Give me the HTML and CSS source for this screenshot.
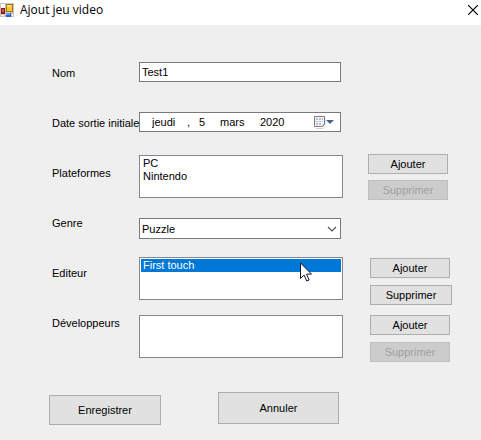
FILE: index.html
```html
<!DOCTYPE html>
<html lang="fr">
<head>
<meta charset="utf-8">
<title>Ajout jeu video</title>
<link rel="stylesheet" href="styles.css">
</head>
<body>
<header class="titlebar">
  <svg class="app-icon" width="14" height="16" viewBox="0 0 14 16" shape-rendering="crispEdges" aria-hidden="true">
    <path fill="#c4c4c4" d="M0 1h14v14H0z"/>
    <path fill="#fff" d="M1 2h4v4H1zM1 13h3v1H1zM12 12h1v2h-1z"/>
    <path fill="#8f1d12" d="M1 6h4v6H1z"/><path fill="#d8543f" d="M2 7h2v3H2z"/>
    <path fill="#9c7a1c" d="M6 2h7v8H6z"/><path fill="#ffc72b" d="M7 3h5v6H7z"/><path fill="#ffe27b" d="M7 3h4v2H7z"/>
    <path fill="#2f62c9" d="M6 11h5v4H6z"/><path fill="#6f9df0" d="M6 11h4v2H6z"/>
  </svg>
  <h1 class="title">Ajout jeu video</h1>
  <button class="close" type="button" aria-label="Fermer">
    <svg width="10" height="10" viewBox="0 0 10 10" aria-hidden="true"><path d="M0 0l10 10M10 0L0 10" stroke="#000" stroke-width="1.2" fill="none"/></svg>
  </button>
</header>
<form class="form">
  <div class="row row-name">
    <label class="label" for="nom">Nom</label>
    <input class="field" id="nom" type="text" value="Test1">
  </div>
  <div class="row row-date">
    <label class="label" for="jour">Date sortie initiale</label>
    <div class="field date">
      <input class="part weekday" type="text" value="jeudi" aria-label="Jour de la semaine">
      <span class="comma">,</span>
      <input class="part day" id="jour" type="text" value="5">
      <input class="part month" type="text" value="mars" aria-label="Mois">
      <input class="part year" type="text" value="2020" aria-label="Année">
      <button class="calendar" type="button" aria-label="Calendrier">
        <svg width="22" height="14" viewBox="0 0 22 14" aria-hidden="true">
          <path d="M3 13.5h7l2-2V3" fill="none" stroke="#d3cfcf"/>
          <path d="M1.500 1.500h10v8l-2 2h-8z" fill="#f3f6fa" stroke="#81797a"/>
          <path d="M3 3h2v2H3zM6 3h2v2H6zM9 3h1v2H9zM3 6h2v1H3zM6 6h2v1H6zM9 6h1v1H9zM3 8h2v2H3zM6 8h2v2H6z" fill="#b3bfd0"/>
          <path d="M11 9v2H9z" fill="#81797a"/>
          <path d="M13 5h8l-4 4z" fill="#45608f"/>
        </svg>
      </button>
    </div>
  </div>
  <div class="row row-platforms">
    <label class="label" for="plateformes">Plateformes</label>
    <select class="list" id="plateformes" size="3"><option>PC</option><option>Nintendo</option></select>
    <div class="buttons">
      <button class="button" type="button">Ajouter</button>
      <button class="button" type="button" disabled>Supprimer</button>
    </div>
  </div>
  <div class="row row-genre">
    <label class="label" for="genre">Genre</label>
    <div class="combo">
      <select class="field" id="genre"><option>Puzzle</option></select>
      <svg class="chevron" width="10" height="6" viewBox="0 0 10 6" aria-hidden="true"><path d="M1 1l4 4 4-4" fill="none" stroke="#555" stroke-width="1.200"/></svg>
    </div>
  </div>
  <div class="row row-editor">
    <label class="label" for="editeur">Editeur</label>
    <div class="list-area">
      <select class="list" id="editeur" size="3"><option selected>First touch</option></select>
      <svg class="pointer" width="13" height="20" viewBox="0 0 13 20" aria-hidden="true"><path d="M.5.9v15.600l3.600-3.500 2.600 6 2.400-1-2.600-5.900h5z" fill="#fff" stroke="#111827"/></svg>
    </div>
    <div class="buttons shifted">
      <button class="button" type="button">Ajouter</button>
      <button class="button wide" type="button">Supprimer</button>
    </div>
  </div>
  <div class="row row-developers">
    <label class="label" for="developpeurs">Développeurs</label>
    <select class="list" id="developpeurs" size="3"></select>
    <div class="buttons shifted">
      <button class="button" type="button">Ajouter</button>
      <button class="button" type="button" disabled>Supprimer</button>
    </div>
  </div>
  <div class="actions">
    <button class="button save" type="submit">Enregistrer</button>
    <button class="button cancel" type="button">Annuler</button>
  </div>
</form>
</body>
</html>
```
FILE: styles.css
```css
* {
  box-sizing: border-box;
}

body {
  margin: 0;
  min-height: 100vh;
  background: #efefef;
  color: #000;
  font: 11px/16px "Liberation Sans", Arial, sans-serif;
}

input,
select,
button {
  margin: 0;
  padding: 0;
  border: 0;
  border-radius: 0;
  color: inherit;
  font: inherit;
}

.titlebar {
  display: flex;
  align-items: center;
  height: 25px;
  padding: 0 3px 6px 0;
  background: #fff;
}

.title {
  flex: 1;
  margin: 0 0 0 6px;
  font: 12px/16px "Open Sans", "Noto Sans", sans-serif;
}

.close {
  display: flex;
  background: none;
}

.form {
  padding: 37px 29px 0 52px;
}

.row {
  display: grid;
  grid-template-columns: 87px 1fr 84px;
  align-items: start;
}

.label {
  white-space: nowrap;
}

.field {
  height: 20px;
  margin-right: 27px;
  padding: 0 2px;
  border: 1px solid #7a7a7a;
  background: #fff;
}

.row-name .label,
.row-date .label {
  padding-top: 3px;
}

.row-date {
  margin-top: 30px;
}

.date {
  display: flex;
  align-items: center;
  padding: 0 5px 0 12px;
}

.part {
  background: none;
}

.weekday {
  width: 35px;
}

.comma {
  width: 12px;
}

.day {
  width: 21px;
}

.month {
  width: 40px;
}

.year {
  width: 28px;
}

.calendar {
  display: flex;
  margin-left: auto;
  background: none;
}

.list {
  width: calc(100% - 25px);
  height: 43px;
  padding: 1px;
  border: 1px solid #828790;
  background: #fff;
  overflow: hidden;
}

.list option {
  min-height: 13px;
  padding: 0 2px;
  line-height: 13px;
}

.list option:checked {
  background: linear-gradient(#0078d7, #0078d7);
  -webkit-text-fill-color: #fff;
}

.buttons {
  display: flex;
  flex-direction: column;
  gap: 6px;
}

.shifted {
  gap: 7px;
  padding-left: 2px;
}

.button {
  width: 80px;
  height: 20px;
  border: 1px solid #adadad;
  background: #e1e1e1;
  text-align: center;
}

.wide {
  width: 82px;
}

.button:disabled {
  border-color: #bfbfbf;
  background: #ccc;
  color: #a0a0a0;
}

.row-platforms {
  margin-top: 22px;
}

.row-platforms .label {
  padding-top: 11px;
}

.row-platforms .list {
  margin-top: 1px;
}

.row-genre {
  margin-top: 15px;
}

.combo {
  display: grid;
  position: relative;
  padding-top: 3px;
}

.combo .field {
  height: 21px;
  padding: 0 2px;
  appearance: none;
}

.chevron {
  position: absolute;
  top: 11px;
  right: 31px;
  pointer-events: none;
}

.row-editor {
  margin-top: 18px;
}

.row-editor .label {
  padding-top: 8px;
}

.row-editor .buttons {
  padding-top: 1px;
}

.list-area {
  display: grid;
  position: relative;
}

.pointer {
  position: absolute;
  top: 5px;
  right: 55px;
  pointer-events: none;
}

.row-developers {
  margin-top: 10px;
}

.actions {
  display: flex;
  align-items: start;
  gap: 57px;
  margin: 30px 0 0 -3px;
}

.save {
  width: 112px;
  height: 30px;
  margin-top: 3px;
}

.cancel {
  width: 121px;
  height: 32px;
}
```
